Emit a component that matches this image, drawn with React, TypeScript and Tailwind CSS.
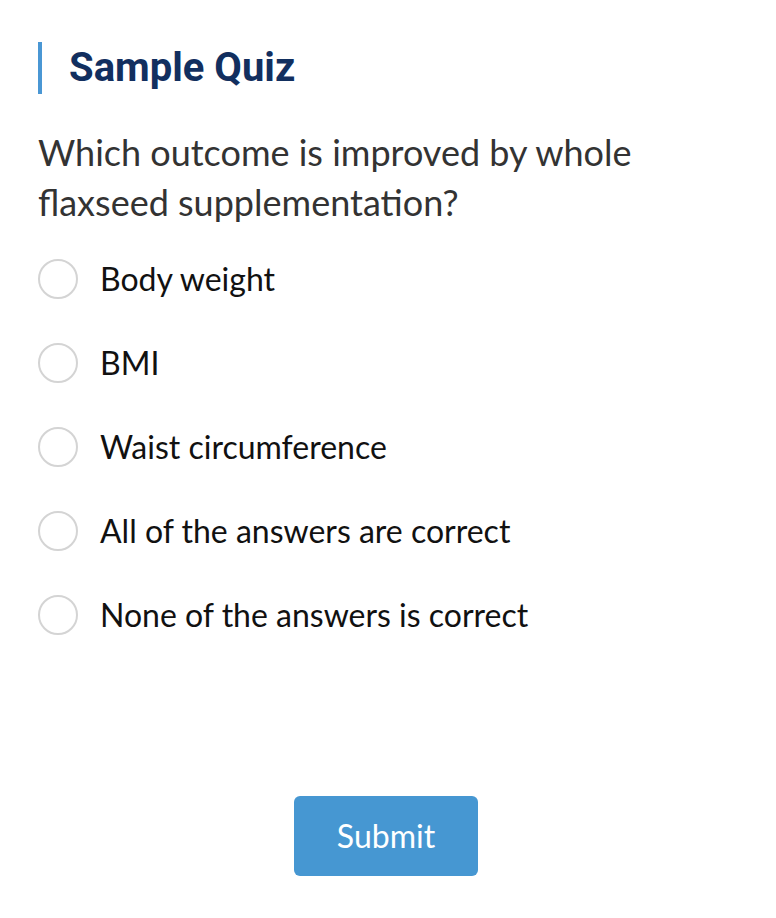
import { useState } from "react";

const options = [
  "Body weight",
  "BMI",
  "Waist circumference",
  "All of the answers are correct",
  "None of the answers is correct",
];

export default function App() {
  const [picked, setPicked] = useState<number | null>(null);

  return (
    <div className="min-h-[918px] w-[776px] bg-white px-[38px] pt-[42px] font-['Lato','Liberation_Sans',sans-serif]">
      <h1 className="flex h-[52px] items-center border-l-4 border-[#4a97d4] pl-[27px] font-['Roboto',sans-serif] text-[40px] font-bold leading-none text-[#122f5f]">
        Sample Quiz
      </h1>

      <p className="mt-[33px] pr-[100px] text-[36px] leading-[50px] text-[#333333]">
        Which outcome is improved by whole flaxseed supplementation?
      </p>

      <div className="mt-[32px] flex flex-col gap-[44px]">
        {options.map((option, i) => (
          <label className="flex cursor-pointer items-center gap-[22px]" key={option}>
            <input
              checked={picked === i}
              className="peer sr-only"
              name="answer"
              onChange={() => setPicked(i)}
              type="radio"
            />
            <span className="flex h-[40px] w-[40px] items-center justify-center rounded-full border-2 border-[#d4d4d4] bg-white">
              {picked === i ? <span className="h-[18px] w-[18px] rounded-full bg-[#4697d2]" /> : null}
            </span>
            <span className="text-[32px] leading-[40px] text-[#111111]">{option}</span>
          </label>
        ))}
      </div>

      <div className="mt-[161px] flex justify-center pr-[4px]">
        <button className="h-[80px] w-[184px] rounded-[6px] bg-[#4697d2] text-[32px] text-white">
          Submit
        </button>
      </div>
    </div>
  );
}
